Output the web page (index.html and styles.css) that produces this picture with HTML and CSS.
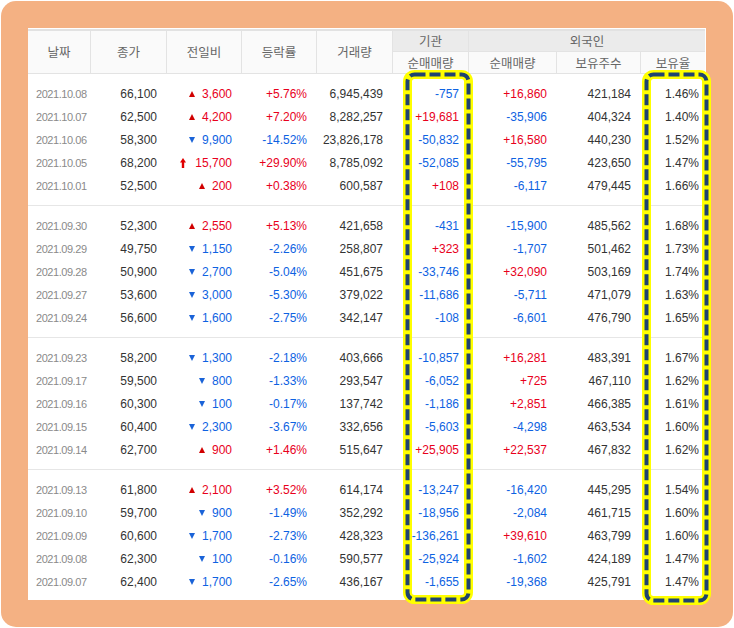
FILE: index.html
```html
<!DOCTYPE html>
<html lang="ko">
<head>
<meta charset="utf-8">
<title>투자자별 매매동향</title>
<link rel="stylesheet" href="styles.css">
</head>
<body>
<div class="frame">
  <div class="panel">
    <table class="grid">
      <colgroup>
        <col class="w63"><col class="w76"><col class="w75"><col class="w75"><col class="w76"><col class="w76"><col class="w88"><col class="w84"><col class="w64">
      </colgroup>
      <thead>
        <tr class="h1">
          <th rowspan="2" class="solo">날짜</th>
          <th rowspan="2" class="solo">종가</th>
          <th rowspan="2" class="solo">전일비</th>
          <th rowspan="2" class="solo">등락률</th>
          <th rowspan="2" class="solo">거래량</th>
          <th class="grp">기관</th>
          <th colspan="3" class="grp last">외국인</th>
        </tr>
        <tr class="h2">
          <th>순매매량</th>
          <th>순매매량</th>
          <th>보유주수</th>
          <th class="last">보유율</th>
        </tr>
      </thead>
      <tbody>
        <tr><td class="date">2021.10.08</td><td>66,100</td><td class="up"><span class="tu"></span>3,600</td><td class="up">+5.76%</td><td>6,945,439</td><td class="dn">-757</td><td class="up">+16,860</td><td>421,184</td><td class="pct">1.46%</td></tr>
        <tr><td class="date">2021.10.07</td><td>62,500</td><td class="up"><span class="tu"></span>4,200</td><td class="up">+7.20%</td><td>8,282,257</td><td class="up">+19,681</td><td class="dn">-35,906</td><td>404,324</td><td class="pct">1.40%</td></tr>
        <tr><td class="date">2021.10.06</td><td>58,300</td><td class="dn"><span class="td"></span>9,900</td><td class="dn">-14.52%</td><td>23,826,178</td><td class="dn">-50,832</td><td class="up">+16,580</td><td>440,230</td><td class="pct">1.52%</td></tr>
        <tr><td class="date">2021.10.05</td><td>68,200</td><td class="up"><svg class="limit" width="6" height="10" viewBox="0 0 6 10"><polygon points="0,4.5 3,0 6,4.5" /><rect x="1.8" y="4" width="2.4" height="6" /></svg>15,700</td><td class="up">+29.90%</td><td>8,785,092</td><td class="dn">-52,085</td><td class="dn">-55,795</td><td>423,650</td><td class="pct">1.47%</td></tr>
        <tr><td class="date">2021.10.01</td><td>52,500</td><td class="up"><span class="tu"></span>200</td><td class="up">+0.38%</td><td>600,587</td><td class="up">+108</td><td class="dn">-6,117</td><td>479,445</td><td class="pct">1.66%</td></tr>
      </tbody>
      <tbody>
        <tr><td class="date">2021.09.30</td><td>52,300</td><td class="up"><span class="tu"></span>2,550</td><td class="up">+5.13%</td><td>421,658</td><td class="dn">-431</td><td class="dn">-15,900</td><td>485,562</td><td class="pct">1.68%</td></tr>
        <tr><td class="date">2021.09.29</td><td>49,750</td><td class="dn"><span class="td"></span>1,150</td><td class="dn">-2.26%</td><td>258,807</td><td class="up">+323</td><td class="dn">-1,707</td><td>501,462</td><td class="pct">1.73%</td></tr>
        <tr><td class="date">2021.09.28</td><td>50,900</td><td class="dn"><span class="td"></span>2,700</td><td class="dn">-5.04%</td><td>451,675</td><td class="dn">-33,746</td><td class="up">+32,090</td><td>503,169</td><td class="pct">1.74%</td></tr>
        <tr><td class="date">2021.09.27</td><td>53,600</td><td class="dn"><span class="td"></span>3,000</td><td class="dn">-5.30%</td><td>379,022</td><td class="dn">-11,686</td><td class="dn">-5,711</td><td>471,079</td><td class="pct">1.63%</td></tr>
        <tr><td class="date">2021.09.24</td><td>56,600</td><td class="dn"><span class="td"></span>1,600</td><td class="dn">-2.75%</td><td>342,147</td><td class="dn">-108</td><td class="dn">-6,601</td><td>476,790</td><td class="pct">1.65%</td></tr>
      </tbody>
      <tbody>
        <tr><td class="date">2021.09.23</td><td>58,200</td><td class="dn"><span class="td"></span>1,300</td><td class="dn">-2.18%</td><td>403,666</td><td class="dn">-10,857</td><td class="up">+16,281</td><td>483,391</td><td class="pct">1.67%</td></tr>
        <tr><td class="date">2021.09.17</td><td>59,500</td><td class="dn"><span class="td"></span>800</td><td class="dn">-1.33%</td><td>293,547</td><td class="dn">-6,052</td><td class="up">+725</td><td>467,110</td><td class="pct">1.62%</td></tr>
        <tr><td class="date">2021.09.16</td><td>60,300</td><td class="dn"><span class="td"></span>100</td><td class="dn">-0.17%</td><td>137,742</td><td class="dn">-1,186</td><td class="up">+2,851</td><td>466,385</td><td class="pct">1.61%</td></tr>
        <tr><td class="date">2021.09.15</td><td>60,400</td><td class="dn"><span class="td"></span>2,300</td><td class="dn">-3.67%</td><td>332,656</td><td class="dn">-5,603</td><td class="dn">-4,298</td><td>463,534</td><td class="pct">1.60%</td></tr>
        <tr><td class="date">2021.09.14</td><td>62,700</td><td class="up"><span class="tu"></span>900</td><td class="up">+1.46%</td><td>515,647</td><td class="up">+25,905</td><td class="up">+22,537</td><td>467,832</td><td class="pct">1.62%</td></tr>
      </tbody>
      <tbody>
        <tr><td class="date">2021.09.13</td><td>61,800</td><td class="up"><span class="tu"></span>2,100</td><td class="up">+3.52%</td><td>614,174</td><td class="dn">-13,247</td><td class="dn">-16,420</td><td>445,295</td><td class="pct">1.54%</td></tr>
        <tr><td class="date">2021.09.10</td><td>59,700</td><td class="dn"><span class="td"></span>900</td><td class="dn">-1.49%</td><td>352,292</td><td class="dn">-18,956</td><td class="dn">-2,084</td><td>461,715</td><td class="pct">1.60%</td></tr>
        <tr><td class="date">2021.09.09</td><td>60,600</td><td class="dn"><span class="td"></span>1,700</td><td class="dn">-2.73%</td><td>428,323</td><td class="dn">-136,261</td><td class="up">+39,610</td><td>463,799</td><td class="pct">1.60%</td></tr>
        <tr><td class="date">2021.09.08</td><td>62,300</td><td class="dn"><span class="td"></span>100</td><td class="dn">-0.16%</td><td>590,577</td><td class="dn">-25,924</td><td class="dn">-1,602</td><td>424,189</td><td class="pct">1.47%</td></tr>
        <tr><td class="date">2021.09.07</td><td>62,400</td><td class="dn"><span class="td"></span>1,700</td><td class="dn">-2.65%</td><td>436,167</td><td class="dn">-1,655</td><td class="dn">-19,368</td><td>425,791</td><td class="pct">1.47%</td></tr>
      </tbody>
    </table>

    <svg class="mark mark-inst" width="70" height="534" viewBox="0 0 70 534">
      <rect class="mark-glow" x="4.5" y="4.5" width="61" height="525" rx="7" ry="7" />
      <rect class="mark-dash" x="4.5" y="4.5" width="61" height="525" rx="7" ry="7" />
    </svg>
    <svg class="mark mark-ratio" width="70" height="535" viewBox="0 0 70 535">
      <rect class="mark-glow" x="4.5" y="4.5" width="60" height="526" rx="7" ry="7" />
      <rect class="mark-dash" x="4.5" y="4.5" width="60" height="526" rx="7" ry="7" />
    </svg>
  </div>
</div>
</body>
</html>
```

FILE: styles.css
```css
html, body {
  margin: 0;
  padding: 0;
  background: #ffffff;
}

.frame {
  box-sizing: border-box;
  width: 732px;
  height: 626px;
  margin: 1px;
  padding: 27px 27px 26px 27px;
  background: #f4b183;
  border-radius: 15px;
}

.panel {
  position: relative;
  box-sizing: border-box;
  height: 572px;
  padding-top: 1px;
  background: #ffffff;
}

.grid {
  width: 677px;
  table-layout: fixed;
  border-collapse: separate;
  border-spacing: 0;
  border-top: 2px solid #e2e2e2;
  font-family: "Liberation Sans", Arial, sans-serif;
  font-size: 12px;
  color: #333333;
}

.w63 { width: 63px; }
.w64 { width: 64px; }
.w75 { width: 75px; }
.w76 { width: 76px; }
.w84 { width: 84px; }
.w88 { width: 88px; }

.grid th {
  padding: 0;
  font-family: "Noto Sans CJK KR", "Noto Sans", sans-serif;
  font-weight: normal;
  font-size: 12.5px;
  color: #666666;
  text-align: center;
  vertical-align: middle;
  background: #fafafa;
  border-right: 1px solid #e3e3e3;
  border-bottom: 1px solid #e3e3e3;
}

.grid th.last {
  border-right: none;
}

.h1 th {
  line-height: 20px;
}

.h1 th.grp {
  background: #ebebeb;
}

.h2 th {
  line-height: 21px;
}

.grid td {
  padding: 0 10px 0 0;
  line-height: 23px;
  text-align: right;
  white-space: nowrap;
}

.grid td.date {
  padding: 0 0 0 8px;
  text-align: left;
  font-size: 11px;
  letter-spacing: -0.45px;
  color: #8a8a8a;
}

.grid td.pct {
  padding-right: 6px;
}

.grid tbody tr:first-child td {
  padding-top: 9px;
}

.grid tbody tr:last-child td {
  padding-bottom: 7px;
}

.grid tbody + tbody tr:first-child td {
  border-top: 1px solid #e6e6e6;
}

.up { color: #e8001c; }
.dn { color: #0d62e2; }

.tu,
.td {
  display: inline-block;
  width: 0;
  height: 0;
  margin-right: 7px;
  vertical-align: 1px;
  border-left: 3.5px solid transparent;
  border-right: 3.5px solid transparent;
}

.tu {
  border-bottom: 6px solid #d10000;
}

.td {
  border-top: 6px solid #1a63d8;
}

.limit {
  display: inline-block;
  margin-right: 9px;
  vertical-align: -1px;
  fill: #e00000;
}

.mark {
  position: absolute;
  overflow: visible;
}

.mark-inst {
  left: 375px;
  top: 42px;
}

.mark-ratio {
  left: 614px;
  top: 42px;
}

.mark-glow {
  fill: none;
  stroke: #ffff00;
  stroke-width: 9;
}

.mark-dash {
  fill: none;
  stroke: #1f4470;
  stroke-width: 4;
  stroke-dasharray: 11 4;
}
```
